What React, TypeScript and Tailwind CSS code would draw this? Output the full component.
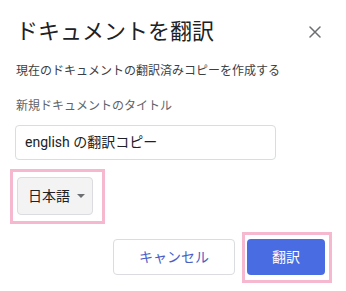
import React from "react";

export default function App() {
  const font = { fontFamily: 'Roboto, "Noto Sans CJK JP", sans-serif' };
  return (
    <div className="w-[346px] h-[291px] bg-white relative overflow-hidden pl-[15px] pr-[14px]" style={font}>
      <div className="flex items-center justify-between pt-[18px]">
        <h1 className="text-[22px] leading-[28px] text-[#202124] font-normal ml-[1px]">ドキュメントを翻訳</h1>
        <div className="w-[18px] h-[18px] mr-[8px] flex items-center justify-center">
          <svg width="12" height="12" viewBox="0 0 12 12" stroke="#6b6e72" strokeWidth="1.5" strokeLinecap="round">
            <path d="M1 1L11 11M11 1L1 11" />
          </svg>
        </div>
      </div>
      <p className="mt-[17px] text-[12px] leading-[16px] text-[#3c4043] ml-[1px]">現在のドキュメントの翻訳済みコピーを作成する</p>
      <p className="mt-[19px] text-[12px] leading-[16px] text-[#5f6368] ml-[1px]">新規ドキュメントのタイトル</p>
      <div className="mt-[11px] w-[261px] h-[35px] border border-[#dadce0] rounded-[4px] flex items-center pl-[9px] text-[14px] text-[#202124]">
        english の翻訳コピー
      </div>
      <div className="mt-[9px] ml-[-5px] w-[95px] h-[55px] border-[3px] border-[#f5b8cf] pl-[4px] pt-[5px]">
        <div className="w-[76px] h-[38px] bg-[#f3f3f3] border border-[#dadce0] rounded-[4px] flex items-center pl-[10px] text-[14px] text-[#202124]">
          <span>日本語</span>
          <svg className="ml-[7px]" width="8" height="4" viewBox="0 0 8 4">
            <path d="M0 0H8L4 4Z" fill="#6b6e72" />
          </svg>
        </div>
      </div>
      <div className="mt-[8px] flex justify-end items-start pr-0">
        <button className="mt-[7px] w-[122px] h-[36px] border border-[#dadce0] rounded-[4px] bg-white text-[14px] text-[#4a5fc6] mr-[7px]">
          キャンセル
        </button>
        <div className="w-[90px] h-[51px] border-[3px] border-[#f5b8cf] pl-[2px] pt-[4px] mr-[0px]">
          <button className="w-[78px] h-[36px] rounded-[4px] bg-[#4a6ce2] text-[14px] text-white">翻訳</button>
        </div>
      </div>
    </div>
  );
}
